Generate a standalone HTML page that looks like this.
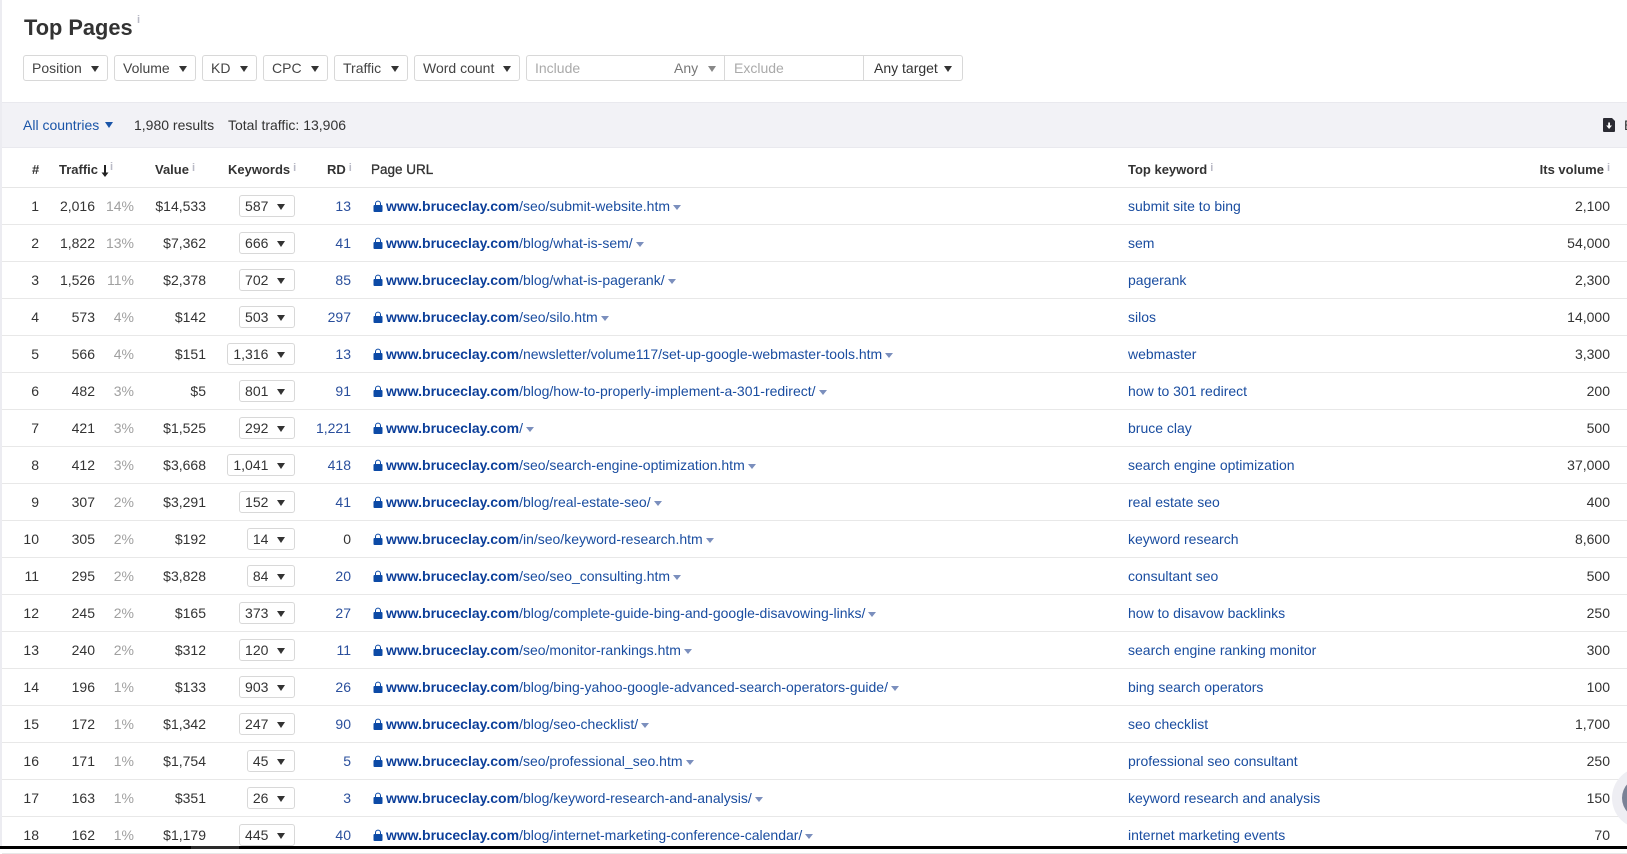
<!DOCTYPE html>
<html><head><meta charset="utf-8"><title>Top Pages</title>
<style>
*{box-sizing:border-box}
html,body{margin:0;padding:0}
body{width:1627px;height:849px;overflow:hidden;position:relative;background:#fff;font:14px/16px "Liberation Sans",Arial,sans-serif;color:#333}
.a{position:absolute;white-space:nowrap}
.left{position:absolute;left:0;top:0;width:2px;height:849px;background:#ececf1}
h1{position:absolute;left:24px;top:15px;margin:0;font:bold 21.8px/26px "Liberation Sans",Arial,sans-serif;color:#333}
.i{font:bold 11px/11px "Liberation Sans",Arial,sans-serif;color:#b9bac6}
.btn{position:absolute;top:55px;height:26px;border:1px solid #d8d8d8;border-radius:3px;line-height:25px;padding-left:8px;color:#444}
.tri{position:absolute;width:0;height:0;border-left:4px solid transparent;border-right:4px solid transparent;border-top:6px solid #333}
.btn .tri{right:8px;top:10px}
.band{position:absolute;left:2px;top:102px;width:1625px;height:46px;background:#f2f2f6;border-top:1px solid #e9e9ee;border-bottom:1px solid #e9e9ee}
.th{position:absolute;top:162px;font-weight:bold;font-size:13px;white-space:nowrap;color:#333}
.th .i{position:relative;top:-3px;margin-left:3px}
.hl{position:absolute;left:2px;top:187px;width:1625px;height:1px;background:#e6e6e6}
.rows{position:absolute;left:0;top:188px;width:1627px}
.r{position:relative;height:37px;border-bottom:1px solid #e8e8e8;margin-left:2px}
.r>*{position:absolute;top:10px;white-space:nowrap}
.n{right:1588px;text-align:right}
.t{right:1532px}
.p{right:1493px;color:#a0a0a0}
.v{right:1421px}
.k{right:1332px;top:7px!important;height:22px;border:1px solid #d8d8d8;border-radius:3px;padding:0 25.6px 0 5px;line-height:20px}
.k .tri{right:9px;top:8px}
.d{right:1276px;color:#2a4f9c}
.u{left:371px;top:0!important;line-height:36px;color:#1a4da0}
.u b{color:#0c3f9a}
.u svg{position:absolute;left:0;top:12px}
.u span{padding-left:13px}
.u i{display:inline-block;width:0;height:0;margin-left:3px;border-left:4px solid transparent;border-right:4px solid transparent;border-top:5px solid #7b8fbd;vertical-align:1px}
.w{left:1126px;color:#1a4da0}
.o{right:17px}
</style></head><body>
<div class="left"></div>
<h1>Top Pages</h1><span class="a i" style="left:137px;top:15px">i</span>

<div class="btn" style="left:23px;width:85px">Position<span class="tri"></span></div>
<div class="btn" style="left:114px;width:82px">Volume<span class="tri"></span></div>
<div class="btn" style="left:202px;width:55px">KD<span class="tri"></span></div>
<div class="btn" style="left:263px;width:65px">CPC<span class="tri"></span></div>
<div class="btn" style="left:334px;width:74px">Traffic<span class="tri"></span></div>
<div class="btn" style="left:414px;width:106px">Word count<span class="tri"></span></div>
<div class="btn" style="left:526px;width:199px;border-radius:3px 0 0 3px;color:#aaa">Include<span class="a" style="left:147px;top:0;color:#777">Any</span><span class="tri" style="border-top-color:#888"></span></div>
<div class="btn" style="left:724px;width:140px;border-radius:0;border-left:1px solid #d8d8d8;color:#aaa;padding-left:9px">Exclude</div>
<div class="btn" style="left:863px;width:100px;border-radius:0 3px 3px 0;color:#333;padding-left:10px">Any target<span class="tri" style="right:10px"></span></div>

<div class="band"></div>
<span class="a" style="left:23px;top:117px;color:#1a55a8">All countries</span><span class="tri" style="left:105px;top:122px;border-top-color:#1a55a8"></span>
<span class="a" style="left:134px;top:117px">1,980 results</span>
<span class="a" style="left:228px;top:117px">Total traffic: 13,906</span>
<svg class="a" style="left:1603px;top:118px" width="13" height="14" viewBox="0 0 13 14"><path d="M1 0H9L12 3V13a1 1 0 0 1-1 1H1a1 1 0 0 1-1-1V1a1 1 0 0 1 1-1Z" fill="#2b2b33"/><path d="M5.2 4.5H7V7.5H9L6.1 11 3.2 7.5H5.2Z" fill="#fff"/></svg>
<span class="a" style="left:1624px;top:117px">Export</span>

<div class="th" style="left:32px">#</div>
<div class="th" style="left:59px">Traffic</div>
<svg class="a" style="left:101px;top:165px" width="8" height="12" viewBox="0 0 8 12"><path d="M3 0H5V7.5H7.5L4 12 .5 7.5H3Z" fill="#222"/></svg>
<span class="a i" style="left:110px;top:162px">i</span>
<div class="th" style="left:155px">Value<span class="i">i</span></div>
<div class="th" style="left:228px">Keywords<span class="i">i</span></div>
<div class="th" style="left:327px">RD<span class="i">i</span></div>
<div class="th" style="left:371px;top:162px;font-weight:normal;font-size:13.5px;-webkit-text-stroke:.3px #333">Page URL</div>
<div class="th" style="left:1128px">Top keyword<span class="i">i</span></div>
<div class="th" style="right:17px">Its volume<span class="i">i</span></div>
<div class="hl"></div>

<svg width="0" height="0" style="position:absolute"><defs><symbol id="l" viewBox="0 0 10 12"><path d="M2 5.5V3.6a3 3 0 0 1 6 0V5.5H7V3.6a2 2 0 0 0-4 0V5.5Z" fill="#0c4aa6"/><rect x="0.5" y="5" width="9" height="7" rx="1" fill="#0c4aa6"/></symbol></defs></svg>

<div class="rows">
<div class="r"><span class="n">1</span><span class="t">2,016</span><span class="p">14%</span><span class="v">$14,533</span><span class="k">587<span class="tri"></span></span><span class="d">13</span><span class="u"><svg width="10" height="12"><use href="#l"/></svg><span><b>www.bruceclay.com</b>/seo/submit-website.htm</span><i></i></span><span class="w">submit site to bing</span><span class="o">2,100</span></div>
<div class="r"><span class="n">2</span><span class="t">1,822</span><span class="p">13%</span><span class="v">$7,362</span><span class="k">666<span class="tri"></span></span><span class="d">41</span><span class="u"><svg width="10" height="12"><use href="#l"/></svg><span><b>www.bruceclay.com</b>/blog/what-is-sem/</span><i></i></span><span class="w">sem</span><span class="o">54,000</span></div>
<div class="r"><span class="n">3</span><span class="t">1,526</span><span class="p">11%</span><span class="v">$2,378</span><span class="k">702<span class="tri"></span></span><span class="d">85</span><span class="u"><svg width="10" height="12"><use href="#l"/></svg><span><b>www.bruceclay.com</b>/blog/what-is-pagerank/</span><i></i></span><span class="w">pagerank</span><span class="o">2,300</span></div>
<div class="r"><span class="n">4</span><span class="t">573</span><span class="p">4%</span><span class="v">$142</span><span class="k">503<span class="tri"></span></span><span class="d">297</span><span class="u"><svg width="10" height="12"><use href="#l"/></svg><span><b>www.bruceclay.com</b>/seo/silo.htm</span><i></i></span><span class="w">silos</span><span class="o">14,000</span></div>
<div class="r"><span class="n">5</span><span class="t">566</span><span class="p">4%</span><span class="v">$151</span><span class="k">1,316<span class="tri"></span></span><span class="d">13</span><span class="u"><svg width="10" height="12"><use href="#l"/></svg><span><b>www.bruceclay.com</b>/newsletter/volume117/set-up-google-webmaster-tools.htm</span><i></i></span><span class="w">webmaster</span><span class="o">3,300</span></div>
<div class="r"><span class="n">6</span><span class="t">482</span><span class="p">3%</span><span class="v">$5</span><span class="k">801<span class="tri"></span></span><span class="d">91</span><span class="u"><svg width="10" height="12"><use href="#l"/></svg><span><b>www.bruceclay.com</b>/blog/how-to-properly-implement-a-301-redirect/</span><i></i></span><span class="w">how to 301 redirect</span><span class="o">200</span></div>
<div class="r"><span class="n">7</span><span class="t">421</span><span class="p">3%</span><span class="v">$1,525</span><span class="k">292<span class="tri"></span></span><span class="d">1,221</span><span class="u"><svg width="10" height="12"><use href="#l"/></svg><span><b>www.bruceclay.com</b>/</span><i></i></span><span class="w">bruce clay</span><span class="o">500</span></div>
<div class="r"><span class="n">8</span><span class="t">412</span><span class="p">3%</span><span class="v">$3,668</span><span class="k">1,041<span class="tri"></span></span><span class="d">418</span><span class="u"><svg width="10" height="12"><use href="#l"/></svg><span><b>www.bruceclay.com</b>/seo/search-engine-optimization.htm</span><i></i></span><span class="w">search engine optimization</span><span class="o">37,000</span></div>
<div class="r"><span class="n">9</span><span class="t">307</span><span class="p">2%</span><span class="v">$3,291</span><span class="k">152<span class="tri"></span></span><span class="d">41</span><span class="u"><svg width="10" height="12"><use href="#l"/></svg><span><b>www.bruceclay.com</b>/blog/real-estate-seo/</span><i></i></span><span class="w">real estate seo</span><span class="o">400</span></div>
<div class="r"><span class="n">10</span><span class="t">305</span><span class="p">2%</span><span class="v">$192</span><span class="k">14<span class="tri"></span></span><span class="d" style="color:#333">0</span><span class="u"><svg width="10" height="12"><use href="#l"/></svg><span><b>www.bruceclay.com</b>/in/seo/keyword-research.htm</span><i></i></span><span class="w">keyword research</span><span class="o">8,600</span></div>
<div class="r"><span class="n">11</span><span class="t">295</span><span class="p">2%</span><span class="v">$3,828</span><span class="k">84<span class="tri"></span></span><span class="d">20</span><span class="u"><svg width="10" height="12"><use href="#l"/></svg><span><b>www.bruceclay.com</b>/seo/seo_consulting.htm</span><i></i></span><span class="w">consultant seo</span><span class="o">500</span></div>
<div class="r"><span class="n">12</span><span class="t">245</span><span class="p">2%</span><span class="v">$165</span><span class="k">373<span class="tri"></span></span><span class="d">27</span><span class="u"><svg width="10" height="12"><use href="#l"/></svg><span><b>www.bruceclay.com</b>/blog/complete-guide-bing-and-google-disavowing-links/</span><i></i></span><span class="w">how to disavow backlinks</span><span class="o">250</span></div>
<div class="r"><span class="n">13</span><span class="t">240</span><span class="p">2%</span><span class="v">$312</span><span class="k">120<span class="tri"></span></span><span class="d">11</span><span class="u"><svg width="10" height="12"><use href="#l"/></svg><span><b>www.bruceclay.com</b>/seo/monitor-rankings.htm</span><i></i></span><span class="w">search engine ranking monitor</span><span class="o">300</span></div>
<div class="r"><span class="n">14</span><span class="t">196</span><span class="p">1%</span><span class="v">$133</span><span class="k">903<span class="tri"></span></span><span class="d">26</span><span class="u"><svg width="10" height="12"><use href="#l"/></svg><span><b>www.bruceclay.com</b>/blog/bing-yahoo-google-advanced-search-operators-guide/</span><i></i></span><span class="w">bing search operators</span><span class="o">100</span></div>
<div class="r"><span class="n">15</span><span class="t">172</span><span class="p">1%</span><span class="v">$1,342</span><span class="k">247<span class="tri"></span></span><span class="d">90</span><span class="u"><svg width="10" height="12"><use href="#l"/></svg><span><b>www.bruceclay.com</b>/blog/seo-checklist/</span><i></i></span><span class="w">seo checklist</span><span class="o">1,700</span></div>
<div class="r"><span class="n">16</span><span class="t">171</span><span class="p">1%</span><span class="v">$1,754</span><span class="k">45<span class="tri"></span></span><span class="d">5</span><span class="u"><svg width="10" height="12"><use href="#l"/></svg><span><b>www.bruceclay.com</b>/seo/professional_seo.htm</span><i></i></span><span class="w">professional seo consultant</span><span class="o">250</span></div>
<div class="r"><span class="n">17</span><span class="t">163</span><span class="p">1%</span><span class="v">$351</span><span class="k">26<span class="tri"></span></span><span class="d">3</span><span class="u"><svg width="10" height="12"><use href="#l"/></svg><span><b>www.bruceclay.com</b>/blog/keyword-research-and-analysis/</span><i></i></span><span class="w">keyword research and analysis</span><span class="o">150</span></div>
<div class="r"><span class="n">18</span><span class="t">162</span><span class="p">1%</span><span class="v">$1,179</span><span class="k">445<span class="tri"></span></span><span class="d">40</span><span class="u"><svg width="10" height="12"><use href="#l"/></svg><span><b>www.bruceclay.com</b>/blog/internet-marketing-conference-calendar/</span><i></i></span><span class="w">internet marketing events</span><span class="o">70</span></div>
</div>

<div class="a" style="left:1612px;top:767px;width:62px;height:62px;border-radius:50%;background:#eeeef3"></div>
<div class="a" style="left:1622px;top:777px;width:42px;height:42px;border-radius:50%;background:#7a8296"></div>
<div class="a" style="left:0;top:846px;width:1627px;height:3px;background:#000"></div>
<div class="a" style="left:191px;top:846px;width:48px;height:3px;background:#2a2a2a"></div>
</body></html>
